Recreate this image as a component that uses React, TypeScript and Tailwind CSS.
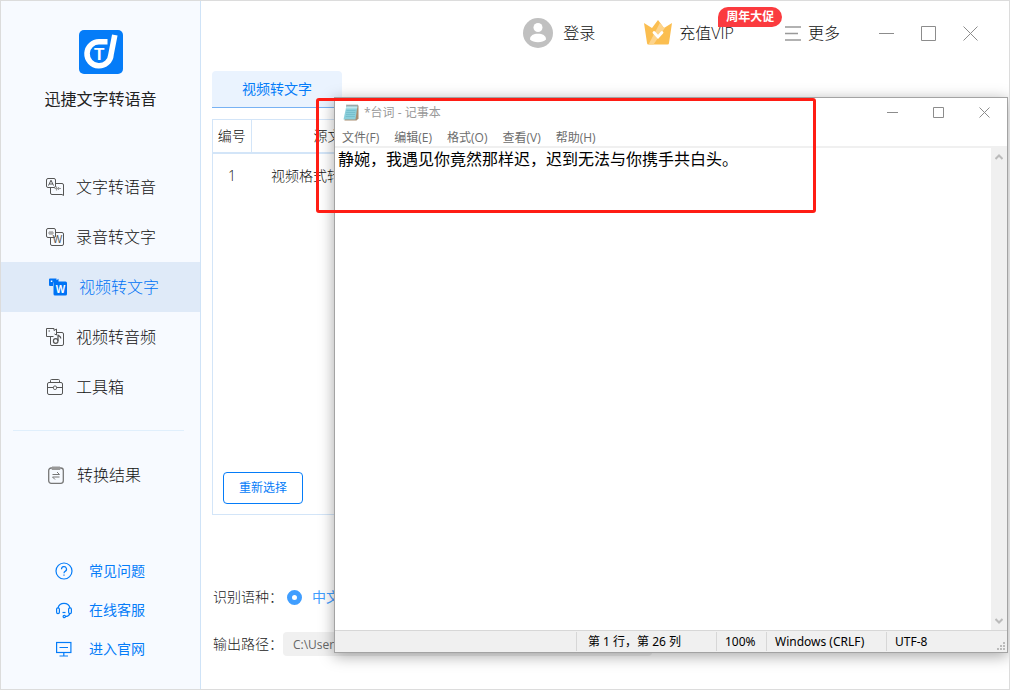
import { ReactNode } from 'react'

type IconProps = { className?: string }

function Logo() {
  return (
    <svg viewBox="0 0 44 44" className="size-11">
      <rect width="44" height="44" rx="5" fill="#057cf8" />
      <path d="M28.500 11.800H20.500A12 12 0 1 0 32 24.500L35.800 5" fill="none" stroke="#fff" strokeWidth="5.600" />
      <text x="20.300" y="30" fontSize="17" fontWeight="bold" fontFamily="Liberation Sans" textAnchor="middle" fill="#fff">T</text>
    </svg>
  )
}

function TextVoiceIcon({ className }: IconProps) {
  return (
    <svg viewBox="0 0 18 18" fill="none" stroke="currentColor" className={className}>
      <rect x=".5" y=".5" width="9" height="9" rx="1.500" />
      <path d="M9.500 5.500H16a1.500 1.500 0 0 1 1.500 1.500v10.500L16 16.500H6A1.500 1.500 0 0 1 4.500 15V9.500" />
      <path d="M2.500 7.500 5 2.200l2.500 5.300M3.500 6h3" />
      <path d="M8.500 10.500h6.500M10.500 8.500v4M12.500 9v3" stroke="#999" strokeWidth="1.200" />
    </svg>
  )
}

function VoiceTextIcon({ className }: IconProps) {
  return (
    <svg viewBox="0 0 18 18" fill="none" stroke="currentColor" className={className}>
      <rect x=".5" y=".5" width="9" height="9" rx="1.500" />
      <path d="M9.500 4.500H16A1.500 1.500 0 0 1 17.500 6v10a1.500 1.500 0 0 1-1.500 1.500H6A1.500 1.500 0 0 1 4.500 16V9.500" />
      <path d="M2 5h6M4 3v4M6 3v4" stroke="#999" strokeWidth="1.200" />
      <text x="11.500" y="15" fontSize="10" fontFamily="Liberation Sans" textAnchor="middle" fill="currentColor" stroke="none">W</text>
    </svg>
  )
}

function VideoTextIcon({ className }: IconProps) {
  return (
    <svg viewBox="0 0 18 18" fill="currentColor" className={className}>
      <path d="M1 .5h6.500v1.700L9.500.8V4H6A2 2 0 0 0 4 6v2H1a1 1 0 0 1-1-1V1.500a1 1 0 0 1 1-1Z" />
      <rect x="4.500" y="3.500" width="13.500" height="14" rx="1.500" />
      <path d="M1.800 2.500h1.500V4H1.800z" fill="#fff" />
      <text x="11.500" y="14.500" fontSize="10" fontWeight="bold" fontFamily="Liberation Sans" textAnchor="middle" fill="#fff">W</text>
    </svg>
  )
}

function VideoAudioIcon({ className }: IconProps) {
  return (
    <svg viewBox="0 0 18 18" fill="none" stroke="currentColor" className={className}>
      <path d="M7.500 8.500h-7v-8h7.500v2l2.500-1.500v6l-2-1" />
      <path d="M2.500 3h1.500" />
      <path d="M11 4.500h5A1.500 1.500 0 0 1 17.500 6v10a1.500 1.500 0 0 1-1.500 1.500H6A1.500 1.500 0 0 1 4.500 16V8.500" />
      <circle cx="9.700" cy="13" r="2.300" strokeWidth="1.200" />
      <path d="M12 13V6.500c.3 1.800 2.800 1.500 2.800 4" strokeWidth="1.200" />
    </svg>
  )
}

function ToolboxIcon({ className }: IconProps) {
  return (
    <svg viewBox="0 0 18 18" fill="none" stroke="currentColor" className={className}>
      <rect x="1.500" y="4.500" width="15" height="12" rx="1.500" />
      <path d="M4.500 4.500V2.500a1 1 0 0 1 1-1h7a1 1 0 0 1 1 1v2M1.500 9.500H7M11 9.500h5.500" />
      <rect x="7.500" y="8" width="3" height="3.500" rx="1.200" />
    </svg>
  )
}

function ResultIcon({ className }: IconProps) {
  return (
    <svg viewBox="0 0 18 18" fill="none" stroke="#777" className={className}>
      <rect x="1.700" y="2" width="14.600" height="15.300" rx="2.500" strokeWidth="1.300" />
      <path d="M5 1h8v2.500H5z" fill="#999" stroke="#999" />
      <path d="M5.500 8.500h7L10 6M12.500 11h-7L8 13.500" />
    </svg>
  )
}

function HelpIcon({ className }: IconProps) {
  return (
    <svg viewBox="0 0 18 18" fill="none" stroke="currentColor" strokeWidth="1.200" className={className}>
      <circle cx="9" cy="9" r="8" />
      <path d="M6.500 7.200a2.500 2.500 0 1 1 3.600 2.200C9.300 9.800 9 10.200 9 11.200M9 12.500v1.200" />
    </svg>
  )
}

function ServiceIcon({ className }: IconProps) {
  return (
    <svg viewBox="0 0 18 18" fill="none" stroke="currentColor" strokeWidth="1.200" className={className}>
      <path d="M3 7a6.200 6.200 0 0 1 12 0M15 12.500c-.8 2-2.500 3-4.500 3" />
      <rect x="1.600" y="6.800" width="2.800" height="5.800" rx="1.400" />
      <rect x="13.600" y="6.800" width="2.800" height="5.800" rx="1.400" />
      <path d="M7.500 11.500h3" />
      <circle cx="9.300" cy="15.500" r="1.200" />
    </svg>
  )
}

function SiteIcon({ className }: IconProps) {
  return (
    <svg viewBox="0 0 18 18" fill="none" stroke="currentColor" strokeWidth="1.200" className={className}>
      <rect x="1.600" y="2.500" width="14.300" height="10" />
      <path d="M4.500 7.500h8.500M8.800 12.500v3M4.500 16h8.500" />
    </svg>
  )
}

function AvatarIcon() {
  return (
    <svg viewBox="0 0 30 30" className="size-[30px]">
      <circle cx="15" cy="15" r="15" fill="#c0c0c0" />
      <circle cx="15" cy="9.500" r="4.500" fill="#fff" />
      <path d="M7 21.500c0-4 3.500-5.700 8-5.700s8 1.700 8 5.700c-2 2-4.500 2.700-8 2.700s-6-.7-8-2.700Z" fill="#fff" />
    </svg>
  )
}

function CrownIcon() {
  return (
    <svg viewBox="0 0 28 27" className="h-[27px] w-7">
      <path d="M0 3 8 8 14 0l6 8 8-5-3 20a1.500 1.500 0 0 1-1.500 1.500h-19A1.500 1.500 0 0 1 3 23Z" fill="#fbbe50" />
      <path d="m16 2.700 4 5.300 1.500-.9L9.500 24.500H4.500Z" fill="#fdd48c" />
      <path d="m10 12.500 4 4.500 4-4.500" fill="none" stroke="#fff" strokeWidth="2.800" strokeLinecap="round" />
    </svg>
  )
}

function NotepadIcon() {
  return (
    <svg viewBox="0 0 16 17" className="h-[17px] w-4">
      <path d="M4 1.500h11.500v13l-2 2h-12Z" fill="#a98d70" />
      <path d="M3.500 1.500h11L12.500 15.500H.5Z" fill="#8ccfdb" />
      <path d="M3.500 1.500h11l-.4 3H2.800Z" fill="#bfe8ee" />
      <path d="M3.500 6.500h9M3.200 8.500h9M3 10.500h9M2.700 12.500h9" stroke="#69b3c4" strokeWidth=".6" />
      <path d="M4 .5v2M6 .5v2M8 .5v2M10 .5v2M12 .5v2M14 .5v2" stroke="#666" strokeWidth=".8" />
    </svg>
  )
}

const MAIN_NAV = [
  { label: '文字转语音', icon: TextVoiceIcon },
  { label: '录音转文字', icon: VoiceTextIcon },
  { label: '视频转文字', icon: VideoTextIcon, active: true },
  { label: '视频转音频', icon: VideoAudioIcon },
  { label: '工具箱', icon: ToolboxIcon },
]

const HELP_LINKS = [
  { label: '常见问题', icon: HelpIcon },
  { label: '在线客服', icon: ServiceIcon },
  { label: '进入官网', icon: SiteIcon },
]

const MENUS = ['文件(F)', '编辑(E)', '格式(O)', '查看(V)', '帮助(H)']

function Sidebar() {
  return (
    <aside className="flex w-[200px] shrink-0 flex-col border-r border-[#cfe3f7] bg-[#f7faff] pb-[21px]">
      <div className="flex h-[161px] flex-col items-center gap-3 pt-[29px]">
        <Logo />
        <h1 className="text-base leading-[26px] text-[#222]">迅捷文字转语音</h1>
      </div>
      <nav className="flex flex-col font-light text-[#111]">
        {MAIN_NAV.map(({ label, icon: Icon, active }) => (
          <a key={label} href="#"
            className={`flex h-[50px] items-center gap-3 ${active ? 'bg-[#dfeaf8] pl-12 text-[#0073f5]' : 'pl-[45px]'}`}>
            <Icon className={`size-[18px] ${active ? '' : 'text-[#555]'}`} />
            <span>{label}</span>
          </a>
        ))}
        <hr className="mt-[18px] mr-4 mb-[19px] ml-3 border-[#e0effc]" />
        <a href="#" className="flex h-[50px] items-center gap-3 pl-[46px]">
          <ResultIcon className="size-[18px]" />
          <span>转换结果</span>
        </a>
      </nav>
      <div className="mt-auto flex flex-col text-sm text-[#057cf8]">
        {HELP_LINKS.map(({ label, icon: Icon }) => (
          <a key={label} href="#" className="flex h-[39px] items-center gap-4 pl-[54px]">
            <Icon className="size-[18px]" />
            <span>{label}</span>
          </a>
        ))}
      </div>
    </aside>
  )
}

function Header() {
  return (
    <header className="flex h-16 shrink-0 items-center justify-end pr-[31px] font-light text-[#111]">
      <button className="flex items-center gap-2.5">
        <AvatarIcon />
        登录
      </button>
      <button className="relative ml-[49px] flex items-center gap-[7px]">
        <CrownIcon />
        充值VIP
        <span className="absolute -top-[13px] left-[74px] h-5 w-16 rounded-[10px] rounded-bl-none bg-[#fb3b3f] text-center text-xs leading-5 font-bold text-white">
          周年大促
        </span>
      </button>
      <button className="ml-[51px] flex items-center gap-[7px]">
        <svg viewBox="0 0 16 15" className="h-[15px] w-4" stroke="#999" strokeWidth="1.500">
          <path d="M0 1h16M0 7.500h13M0 14h16" />
        </svg>
        更多
      </button>
      <div className="ml-[39px] flex items-center gap-[27px]">
        <button aria-label="最小化">
          <svg viewBox="0 0 15 15" className="size-[15px]" stroke="#8c8c8c"><path d="M0 7.500h15" /></svg>
        </button>
        <button aria-label="最大化">
          <svg viewBox="0 0 15 15" className="size-[15px]" stroke="#8c8c8c" fill="none"><path d="M.5.5h14v14H.5z" /></svg>
        </button>
        <button aria-label="关闭">
          <svg viewBox="0 0 15 15" className="size-[15px]" stroke="#8c8c8c"><path d="m.5.5 14 14M14.500.5l-14 14" /></svg>
        </button>
      </div>
    </header>
  )
}

function Converter() {
  return (
    <section className="flex flex-1 flex-col px-[11px] pt-[6px] pb-[33px] text-sm">
      <button className="h-[37px] w-[130px] rounded-t border-b border-[#78b2f3] bg-[#eaf3fe] text-[#057cf8]">视频转文字</button>

      <div className="mt-[11px] flex flex-1 flex-col border border-[#d3e5f8]">
        <table className="w-full table-fixed font-light text-[#111]">
          <thead>
            <tr className="h-[33px] border-b-2 border-[#d3e5f8]">
              <th className="w-[38px] border-r border-[#d3e5f8] font-light">编号</th>
              <th className="w-[168px] pl-[62px] text-left font-light">源文</th>
              <th />
            </tr>
          </thead>
          <tbody>
            <tr className="h-[45px]">
              <td className="text-center">1</td>
              <td className="pl-5">视频格式转</td>
              <td />
            </tr>
          </tbody>
        </table>
        <button className="mt-auto mb-2.5 ml-2.5 h-8 w-20 rounded border border-[#057cf8] text-xs text-[#057cf8]">重新选择</button>
      </div>

      <div className="mt-[70px] flex h-6 items-center font-light text-[#222]">
        <span className="w-[75px] pl-px">识别语种：</span>
        <label className="flex items-center gap-2.5 font-normal text-[#409eff]">
          <input type="radio" name="lang" defaultChecked
            className="size-[15px] appearance-none rounded-full border-[5px] border-[#409eff] bg-white" />
          中文
        </label>
      </div>
      <div className="mt-[23px] flex h-6 items-center font-light text-[#222]">
        <label htmlFor="output" className="w-[71px] pl-px">输出路径：</label>
        <input id="output" readOnly defaultValue="C:\Users"
          className="h-6 w-[369px] rounded bg-[#f0f0f0] px-2.5 text-xs font-normal text-[#666]" />
      </div>
    </section>
  )
}

function CaptionButton({ label, children }: { label: string; children: ReactNode }) {
  return (
    <button aria-label={label} className="flex h-7 w-[46px] items-center justify-center">
      <svg viewBox="0 0 11 11" className="size-[11px]" stroke="#8c8c8c" fill="none">{children}</svg>
    </button>
  )
}

function Notepad() {
  return (
    <div className="absolute top-24 right-px bottom-9 left-[333px] flex flex-col border border-[#a3a3a3] bg-white shadow-[0_3px_14px_rgba(0,0,0,0.35)]">
      <div className="flex h-[29px] shrink-0 items-center pl-2 text-xs text-[#999]">
        <NotepadIcon />
        <span className="ml-[5px]">*台词 - 记事本</span>
        <div className="ml-auto flex">
          <CaptionButton label="最小化"><path d="M0 5.500h11" /></CaptionButton>
          <CaptionButton label="最大化"><path d="M.5.5h10v10H.5z" /></CaptionButton>
          <CaptionButton label="关闭"><path d="m.5.5 10 10M10.500.5l-10 10" /></CaptionButton>
        </div>
      </div>
      <div className="flex h-[21px] shrink-0 items-center gap-[15px] border-b-2 border-[#f0f0f0] pt-0.5 pl-[7px] text-xs text-[#6d6d6d]">
        {MENUS.map(menu => <button key={menu}>{menu}</button>)}
      </div>

      <div className="flex flex-1">
        <textarea aria-label="台词" spellCheck={false}
          className="flex-1 resize-none pl-[3px] text-base leading-[22px] text-black outline-none"
          defaultValue="静婉，我遇见你竟然那样迟，迟到无法与你携手共白头。" />
        <div className="flex w-4 flex-col items-center justify-between bg-[#f0f0f0] py-1.5">
          <svg viewBox="0 0 8 6" className="h-1.5 w-2" fill="none" stroke="#bbb" strokeWidth="2"><path d="m.5 5 3.500-3.500L7.500 5" /></svg>
          <svg viewBox="0 0 8 6" className="h-1.5 w-2" fill="none" stroke="#bbb" strokeWidth="2"><path d="m.5 1 3.500 3.500L7.500 1" /></svg>
        </div>
      </div>

      <footer className="flex h-[22px] shrink-0 items-stretch justify-end border-t border-[#d7d7d7] bg-[#f0f0f0] font-['Noto_Sans','Noto_Sans_CJK_SC',sans-serif] text-xs leading-5 text-black">
        <span className="my-px w-[140px] border-l border-[#d7d7d7] pl-[11px]">第 1 行，第 26 列</span>
        <span className="my-px w-[50px] border-l border-[#d7d7d7] pl-2">100%</span>
        <span className="my-px w-[120px] border-l border-[#d7d7d7] pl-2">Windows (CRLF)</span>
        <span className="my-px w-[121px] border-l border-[#d7d7d7] pl-2">UTF-8</span>
        {/* resize grip */}
        <svg viewBox="0 0 8 8" className="absolute right-0.5 bottom-0.5 size-2" fill="#bbb">
          <path d="M6 0h2v2H6zM6 3h2v2H6zM3 3h2v2H3zM6 6h2v2H6zM3 6h2v2H3zM0 6h2v2H0z" />
        </svg>
      </footer>
    </div>
  )
}

export default function App() {
  return (
    <div className="relative flex min-h-screen overflow-hidden border border-[#dcdcdc] bg-white font-['Open_Sans','Noto_Sans_CJK_SC',sans-serif] text-base">
      <Sidebar />
      <main className="flex flex-1 flex-col">
        <Header />
        <Converter />
      </main>
      <Notepad />
      {/* highlight frame around the recognised text */}
      <div className="pointer-events-none absolute top-[97px] left-[315px] h-[115px] w-[500px] rounded-[3px] border-[3px] border-[#ff1d14]" />
    </div>
  )
}
